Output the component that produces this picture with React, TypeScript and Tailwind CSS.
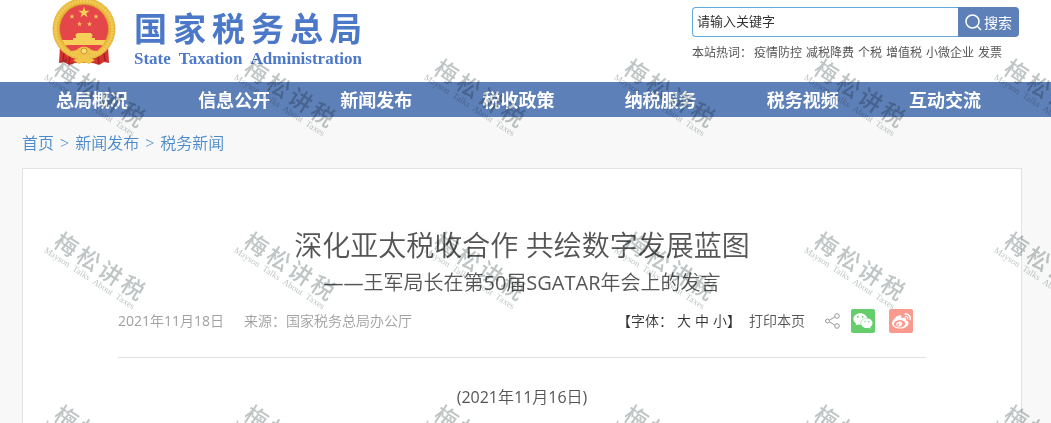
import { FaWeibo, FaWeixin } from "react-icons/fa"

const navItems = ["总局概况", "信息公开", "新闻发布", "税收政策", "纳税服务", "税务视频", "互动交流"]
const hotWords = ["疫情防控", "减税降费", "个税", "增值税", "小微企业", "发票"]
const crumbs = ["首页", "新闻发布", "税务新闻"]
const siteName = ["国", "家", "税", "务", "总", "局"]
const star = "M0 -1 L.225 -.309 L.951 -.309 L.363 .118 L.588 .809 L0 .382 L-.588 .809 L-.363 .118 L-.951 -.309 L-.225 -.309Z"

function Emblem() {
  return (
    <svg width="66" height="68" viewBox="0 0 66 68" aria-hidden="true">
      <path d="M9 46 L8 63 L13 62 L18 65 L24 63 L42 63 L48 65 L53 62 L58 63 L57 46Z" fill="#d3322f" />
      <path d="M13 53 L12 61 M19 56 L18 64 M53 53 L54 61 M47 56 L48 64" stroke="#a81f22" strokeWidth="1.5" />
      <ellipse cx="33" cy="29" rx="31.5" ry="31" fill="#e9b83c" />
      <ellipse cx="33" cy="29" rx="28.5" ry="28" fill="none" stroke="#f3cd5c" strokeWidth="3" strokeDasharray="2 1" />
      <circle cx="33" cy="29" r="24.5" fill="#e5464a" stroke="#d79a2a" />
      <g fill="#f6cf58">
        <path d={star} transform="translate(33 12.5) scale(6)" />
        <path d={star} transform="translate(21 16.5) scale(2.8)" />
        <path d={star} transform="translate(45 16.5) scale(2.8)" />
        <path d={star} transform="translate(28.5 24) scale(2.8)" />
        <path d={star} transform="translate(38.5 24) scale(2.8)" />
        <path d="M26 33 H40 L42 36 H24Z M25 36 H41 V39 H25Z M22 38 H44 V42 H22Z" />
        <path d="M11 40 H55 L52 45 H14Z" />
      </g>
      <path d="M15 46 H51 L46 51 H20Z" fill="#e5464a" />
      <path d="M19 51 Q26 51 28 48 Q33 45 38 48 Q40 51 47 51 Q43 57 38 54 Q33 59 28 54 Q23 57 19 51Z" fill="#f1c54a" />
      <path d="M22 60 Q33 55 44 60 L38 64 Q33 61 28 64Z" fill="#f1c54a" />
      <circle cx="33" cy="51" r="3" fill="#f8dc80" stroke="#cf9426" />
    </svg>
  )
}

function Watermark() {
  return (
    <div className="flex h-[173px] w-[190px] shrink-0 items-center justify-center">
      <div className="w-[106px] rotate-[33deg] text-[#bfc5c5]">
        <div className="flex justify-between pl-1 text-[23px] leading-6 font-medium">
          <span>梅</span>
          <span>松</span>
          <span>讲</span>
          <span>税</span>
        </div>
        <div className="flex justify-between font-['Liberation_Serif',serif] text-[9px] leading-2">
          <span>Mayson</span>
          <span>Talks</span>
          <span>About</span>
          <span>Taxes</span>
        </div>
      </div>
    </div>
  )
}

function Header() {
  return (
    <header className="flex h-[82px] items-start justify-between bg-white pr-8 pl-[51px]">
      <a href="#" className="flex items-start text-[#4b78c8]">
        <Emblem />
        <div className="ml-[17px] w-[228px] pt-2">
          <div className="flex justify-between text-[33px] leading-[42px] font-bold">
            {siteName.map((char) => (
              <span key={char}>{char}</span>
            ))}
          </div>
          <div className="flex justify-between font-['Liberation_Serif',serif] text-[17px] leading-[18px] font-bold">
            <span>State</span>
            <span>Taxation</span>
            <span>Administration</span>
          </div>
        </div>
      </a>
      <div className="w-[327px] pt-[7px]">
        <form className="flex h-[30px]">
          <input
            type="text"
            aria-label="搜索关键字"
            defaultValue="请输入关键字"
            className="min-w-0 flex-1 rounded-l border border-r-0 border-[#62a9dd] bg-white px-1 text-[13px] text-[#333] outline-none"
          />
          <button type="button" className="flex w-[61px] items-center justify-center gap-0.5 rounded-r bg-[#5e80b8] text-[14px] text-white">
            <svg width="17" height="17" viewBox="0 0 17 17" fill="none" stroke="currentColor" strokeWidth="1.5" aria-hidden="true">
              <circle cx="7.5" cy="7.5" r="6.5" />
              <path d="M12 12 L16 16" />
            </svg>
            搜索
          </button>
        </form>
        <div className="flex gap-1 pt-2 text-[12px] leading-4 whitespace-nowrap text-[#555]">
          <span className="-mr-0.5">本站热词：</span>
          {hotWords.map((word) => (
            <a key={word} href="#">{word}</a>
          ))}
        </div>
      </div>
    </header>
  )
}

export default function App() {
  return (
    <div className="relative flex min-h-screen flex-col overflow-hidden bg-[#f8f8f8] font-['Open_Sans','Noto_Sans_CJK_SC',sans-serif]">
      <Header />
      <nav className="grid h-[35px] grid-cols-7 items-center bg-[#5e80b8] pr-[35px] pl-[21px] text-center text-[18px] leading-6 font-bold text-white">
        {navItems.map((item) => (
          <a key={item} href="#">{item}</a>
        ))}
      </nav>
      <div className="flex gap-[6px] px-[22px] pt-[14px] text-[16px] leading-6 font-[350] text-[#4a8acb]">
        {crumbs.map((crumb, index) => (
          <div key={crumb} className="flex gap-[6px]">
            {index > 0 && <span>&gt;</span>}
            <a href="#">{crumb}</a>
          </div>
        ))}
      </div>
      <main className="mt-[13px] mr-[29px] ml-[22px] flex-1 border border-b-0 border-[#e2e2e2] bg-white px-[95px] pt-14 font-['Open_Sans','Noto_Sans_CJK_SC_DemiLight','Noto_Sans_CJK_SC',sans-serif] text-[#555]">
        <h1 className="text-center text-[28px] leading-10">深化亚太税收合作 共绘数字发展蓝图</h1>
        <h2 className="text-center text-[20px] leading-9">——王军局长在第50届SGATAR年会上的发言</h2>
        <div className="flex items-center justify-between border-b border-[#e2e2e2] pt-2 pb-6 text-[14px] leading-6">
          <div className="flex gap-5 text-[#a0a0a0]">
            <span>2021年11月18日</span>
            <span>来源：国家税务总局办公厅</span>
          </div>
          <div className="flex items-center pr-[13px]">
            <div className="flex text-[#333]">
              <span>【字体：</span>
              <div className="flex gap-1 pl-1">
                <button type="button">大</button>
                <button type="button">中</button>
                <button type="button">小</button>
              </div>
              <span>】</span>
            </div>
            <button type="button" className="ml-2">打印本页</button>
            <svg className="ml-5" width="15" height="16" viewBox="0 0 15 16" fill="none" stroke="#999" aria-hidden="true">
              <circle cx="2.5" cy="8" r="2" />
              <circle cx="12" cy="3" r="2.3" />
              <circle cx="12" cy="13" r="2.3" />
              <path d="M4.5 7 L9.8 4 M4.5 9 L9.8 12" />
            </svg>
            <button type="button" aria-label="微信" className="ml-[11px] flex size-6 items-center justify-center rounded-xs bg-[#66cd6c] text-white">
              <FaWeixin size={20} />
            </button>
            <button type="button" aria-label="微博" className="ml-[14px] flex size-6 items-center justify-center rounded-xs bg-[#fa9a8f] text-white">
              <FaWeibo size={19} />
            </button>
          </div>
        </div>
        <p className="pt-[27px] text-center text-[16px] leading-6">(2021年11月16日)</p>
      </main>
      <div className="pointer-events-none absolute inset-0 overflow-hidden pt-2 pl-px mix-blend-multiply select-none" aria-hidden="true">
        {[0, 1, 2].map((row) => (
          <div key={row} className="flex">
            {[0, 1, 2, 3, 4, 5].map((col) => (
              <Watermark key={col} />
            ))}
          </div>
        ))}
      </div>
    </div>
  )
}
